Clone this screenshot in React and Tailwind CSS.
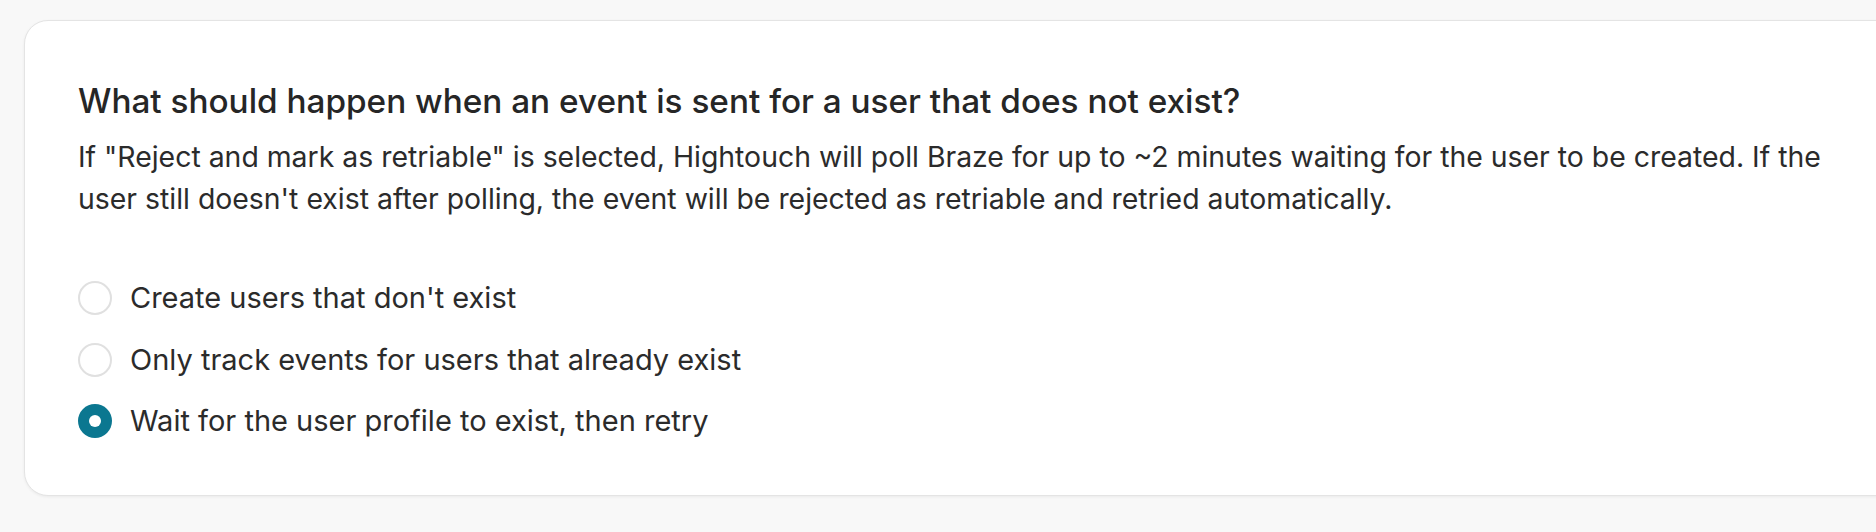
import React, { useState } from "react";

const options = [
  { value: "create", label: "Create users that don't exist" },
  { value: "existing", label: "Only track events for users that already exist" },
  { value: "wait", label: "Wait for the user profile to exist, then retry" },
];

const Radio = ({ checked }) =>
  checked ? (
    <span className="flex h-[34px] w-[34px] shrink-0 items-center justify-center rounded-full bg-[#0b7790]">
      <span className="h-[12px] w-[12px] rounded-full bg-white" />
    </span>
  ) : (
    <span className="h-[34px] w-[34px] shrink-0 rounded-full border-2 border-[#e0e0e0] bg-white" />
  );

const App = () => {
  const [selected, setSelected] = useState("wait");

  return (
    <div
      className="h-[532px] w-full overflow-hidden bg-[#f8f8f8] pl-[24px] pt-[20px] text-[#2b2b2b]"
      style={{ fontFamily: "Inter, 'Noto Sans', sans-serif" }}
    >
      <div className="w-[1920px] rounded-[24px] border border-[#e4e4e4] bg-white px-[53px] pb-[54px] pt-[60px] shadow-[0_1px_3px_rgba(0,0,0,0.06)]">
        <h2 className="text-[33.3px] font-medium leading-[40px] text-[#262626]">
          What should happen when an event is sent for a user that does not exist?
        </h2>
        <p className="mt-[15px] w-[1790px] text-[28.4px] leading-[42px]">
          If "Reject and mark as retriable" is selected, Hightouch will poll Braze for up to ~2 minutes waiting for the
          user to be created. If the user still doesn't exist after polling, the event will be rejected as retriable and
          retried automatically.
        </p>

        {/* options */}
        <div className="mt-[58px] flex flex-col gap-[21.5px]">
          {options.map((opt) => (
            <label
              key={opt.value}
              onClick={() => setSelected(opt.value)}
              className="flex h-[40px] cursor-pointer items-center gap-[18px]"
            >
              <Radio checked={selected === opt.value} />
              <span className="text-[29px] leading-[40px]">{opt.label}</span>
            </label>
          ))}
        </div>
      </div>
    </div>
  );
};

export default App;
